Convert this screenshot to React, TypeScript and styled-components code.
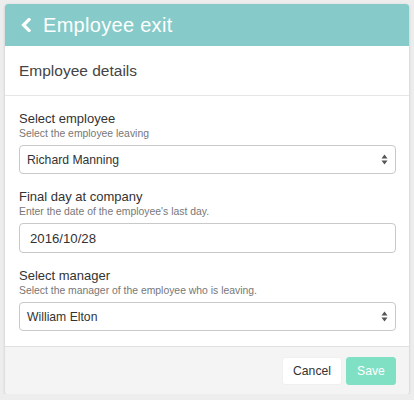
import React from "react";
import styled, { createGlobalStyle } from "styled-components";

const Global = createGlobalStyle`
  html, body { margin: 0; padding: 0; background: #ededed; }
  body { font-family: "Liberation Sans", Arial, sans-serif; }
  * { box-sizing: border-box; }
`;

const Card = styled.div`
  margin: 4px 5px 0 5px;
  width: 404px;
  background: #fff;
  border-radius: 3px;
  box-shadow: 0 1px 3px rgba(0,0,0,0.18);
  overflow: hidden;
`;

const Header = styled.div`
  height: 42px;
  background: #86cbc9;
  display: flex;
  align-items: center;
  padding-left: 16px;
  gap: 12px;
  color: #fff;
  font-size: 20px;
  letter-spacing: 0.3px;
`;

const Section = styled.div`
  height: 50px;
  display: flex;
  align-items: center;
  padding-left: 14px;
  font-size: 15.5px;
  color: #444;
  border-bottom: 1px solid #e6e6e6;
`;

const Form = styled.div`
  padding: 14px 13px 15px 14px;
  display: flex;
  flex-direction: column;
`;

const Field = styled.div<{ $first?: boolean }>`
  display: flex;
  flex-direction: column;
  margin-top: ${(p) => (p.$first ? "0" : "14px")};
`;

const Label = styled.div`
  font-size: 13px;
  line-height: 17px;
  color: #333;
`;

const Help = styled.div`
  font-size: 10.4px;
  line-height: 14px;
  color: #777;
  margin-bottom: 4px;
`;

const Box = styled.div<{ $h: number; $pad: number; $fs: number }>`
  height: ${(p) => p.$h}px;
  border: 1px solid #c9c9c9;
  border-radius: 4px;
  display: flex;
  align-items: center;
  justify-content: space-between;
  padding: 0 7px 0 ${(p) => p.$pad}px;
  font-size: ${(p) => p.$fs}px;
  color: #333;
  background: #fff;
`;

const Footer = styled.div`
  height: 48px;
  background: #f4f4f4;
  border-top: 1px solid #e0e0e0;
  display: flex;
  align-items: center;
  justify-content: flex-end;
  gap: 4px;
  padding-right: 13px;
`;

const Button = styled.div<{ $primary?: boolean }>`
  height: 28px;
  width: ${(p) => (p.$primary ? 50 : 60)}px;
  border-radius: 3px;
  display: flex;
  align-items: center;
  justify-content: center;
  font-size: 12.2px;
  background: ${(p) => (p.$primary ? "#7fe0c4" : "#fff")};
  color: ${(p) => (p.$primary ? "#fff" : "#333")};
  border: 1px solid ${(p) => (p.$primary ? "#7fe0c4" : "#f0f0f0")};
`;

const Arrows = () => (
  <svg width="7" height="11" viewBox="0 0 7 11">
    <path d="M3.5 0.5 L6.5 4.5 L0.5 4.5 Z" fill="#555" />
    <path d="M3.5 10.5 L6.5 6.5 L0.5 6.5 Z" fill="#555" />
  </svg>
);

const Chevron = () => (
  <svg width="10" height="14" viewBox="0 0 10 14">
    <path d="M8 1.5 L2.5 7 L8 12.5" stroke="#fff" strokeWidth="3.2" fill="none" strokeLinecap="square" />
  </svg>
);

export default function App() {
  return (
    <>
      <Global />
      <Card>
        <Header>
          <Chevron />
          <span>Employee exit</span>
        </Header>
        <Section>Employee details</Section>
        <Form>
          <Field $first>
            <Label>Select employee</Label>
            <Help>Select the employee leaving</Help>
            <Box $h={29} $pad={7} $fs={12.2}>
              <span>Richard Manning</span>
              <Arrows />
            </Box>
          </Field>
          <Field>
            <Label>Final day at company</Label>
            <Help>Enter the date of the employee's last day.</Help>
            <Box $h={30} $pad={10} $fs={13.2}>
              <span>2016/10/28</span>
            </Box>
          </Field>
          <Field>
            <Label>Select manager</Label>
            <Help>Select the manager of the employee who is leaving.</Help>
            <Box $h={29} $pad={7} $fs={12.2}>
              <span>William Elton</span>
              <Arrows />
            </Box>
          </Field>
        </Form>
        <Footer>
          <Button>Cancel</Button>
          <Button $primary>Save</Button>
        </Footer>
      </Card>
    </>
  );
}
